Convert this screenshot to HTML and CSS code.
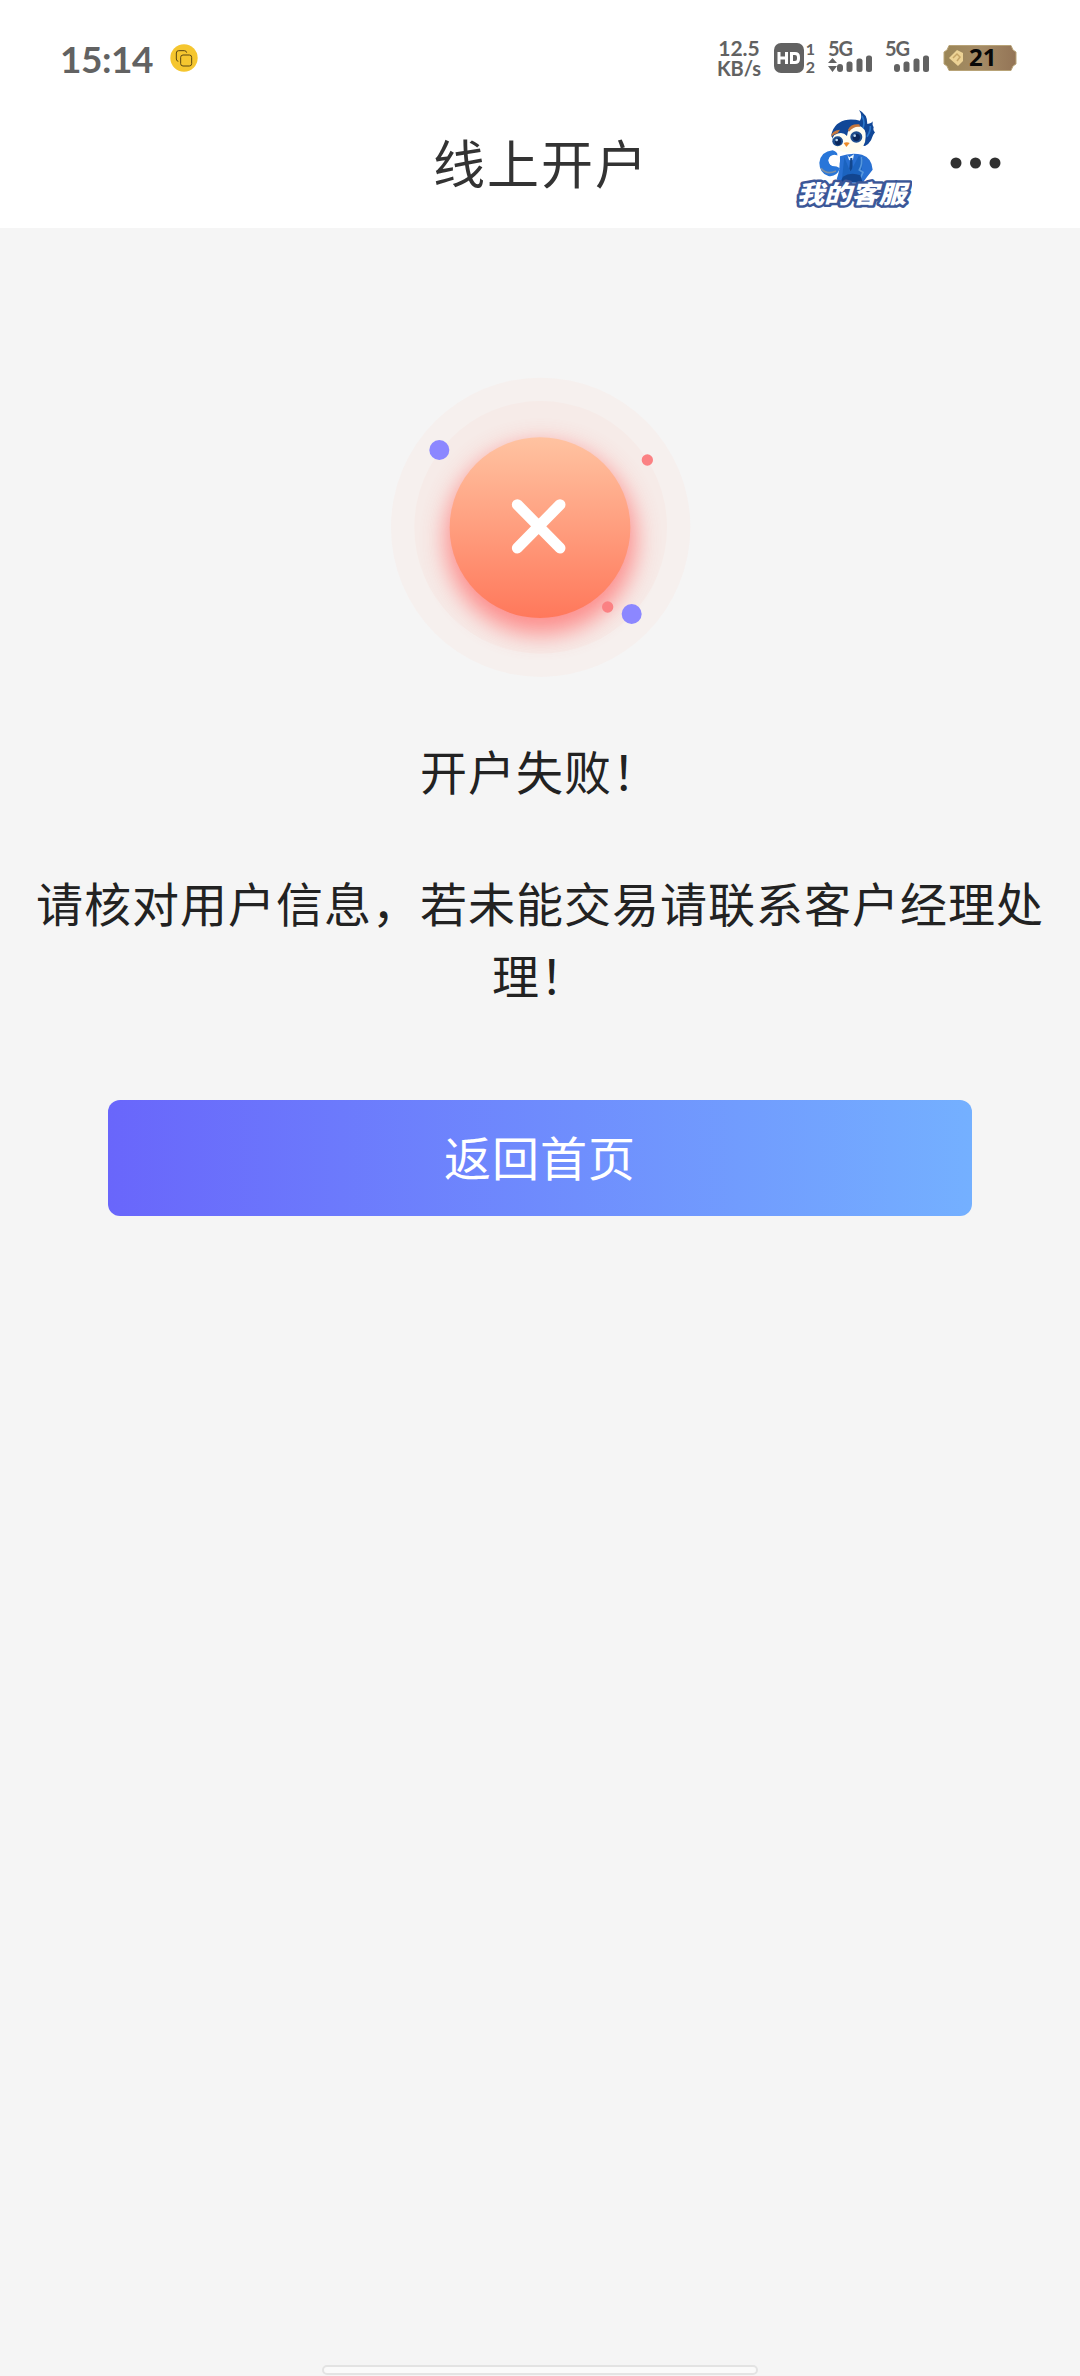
FILE: index.html
```html
<!DOCTYPE html>
<html lang="zh-CN">
<head>
    <meta charset="UTF-8">
    <meta name="viewport" content="width=device-width, initial-scale=1.0">
    <title>线上开户</title>
    <link rel="stylesheet" href="styles.css">
</head>
<body>
    <div class="status-bar">
        <span class="time">15:14</span>
        <svg class="app-dot" width="28" height="28" viewBox="0 0 84 84">
            <circle cx="42" cy="42" r="41" fill="#f5c62f"/>
            <g fill="none" stroke="#5b4712" stroke-width="3">
                <path d="M25 52 Q19 51 19 45 V27 Q19 20 26 20 H43 Q49 20 50 26"/>
                <rect x="32" y="33" width="33" height="33" rx="7"/>
            </g>
        </svg>
        <div class="speed">
            <span>12.5</span>
            <span>KB/s</span>
        </div>
        <div class="hd">
            <svg width="30" height="30" viewBox="0 0 30 30">
                <rect width="30" height="30" rx="7" fill="#626262"/>
                <path d="M5 9V21M12.500 9V21M5 15H12.500M17.500 10.500H21Q24.500 10.500 24.500 14V16Q24.500 19.500 21 19.500H17.500ZM17.500 9V21" fill="none" stroke="#fff" stroke-width="3"/>
            </svg>
            <div class="sims">
                <span>1</span>
                <span>2</span>
            </div>
        </div>
        <svg class="signal" width="46" height="50" viewBox="0 -8 46 50">
            <text x="0" y="15" class="net">5G</text>
            <path d="M0 22 4.500 17 9 22ZM0 25 4.500 31 9 25Z"/>
            <rect x="9" y="23" width="6" height="8" rx="3"/>
            <rect x="18.500" y="20.500" width="6" height="10.500" rx="2.500"/>
            <rect x="28.500" y="17.500" width="6" height="13.500" rx="2.500"/>
            <rect x="38" y="14.500" width="6" height="16.500" rx="2.500"/>
        </svg>
        <svg class="signal" width="46" height="50" viewBox="0 -8 46 50">
            <text x="0" y="15" class="net">5G</text>
            <rect x="9" y="23" width="6" height="8" rx="3"/>
            <rect x="18.500" y="20.500" width="6" height="10.500" rx="2.500"/>
            <rect x="28.500" y="17.500" width="6" height="13.500" rx="2.500"/>
            <rect x="38" y="14.500" width="6" height="16.500" rx="2.500"/>
        </svg>
        <svg class="battery" width="74" height="44" viewBox="0 -8 74 44">
            <defs>
                <linearGradient id="gold">
                    <stop offset="0" stop-color="#9a8556"/>
                    <stop offset=".5" stop-color="#a58b66"/>
                    <stop offset="1" stop-color="#937456"/>
                </linearGradient>
            </defs>
            <path d="M6 1.500H68L70 6 73 8V20L70 22 68 26.500H6L4 22 1 20V8L4 6Z" fill="url(#gold)" stroke="#b8a377"/>
            <path d="M6 14 14 6 20 9V17L15 22Z" fill="#ecd295"/>
            <path d="M10 14 14 10 17 13 14 17" fill="none" stroke="#c5a466" stroke-width="1.500"/>
            <text x="26" y="22" class="level">21</text>
        </svg>
    </div>

    <div class="nav-bar">
        <h1 class="nav-title">线上开户</h1>
        <!-- customer service mascot -->
        <svg class="mascot" width="122" height="113" viewBox="30 21 366 339">
            <path d="M154 104Q163 64 204 59Q226 58 240 62Q249 47 237 30Q263 43 262 72Q275 70 278 64Q276 76 281 82Q278 91 285 97Q278 104 273 121Q267 132 255 138L160 126Z" fill="#114797"/>
            <path d="M246 48Q257 67 247 90M271 78Q272 94 261 110" fill="none" stroke="#2c77ca" stroke-width="5"/>
            <path d="M163 105Q187 91 201 108Q205 78 233 75Q260 84 257 111Q257 145 226 157Q202 164 174 149Q157 138 157 115Z" fill="#fffdf0"/>
            <path d="M153 111Q154 91 180 89L173 100Q164 101 153 111ZM204 89Q213 70 238 73L240 81Q222 78 207 95Z" fill="#c6773c"/>
            <ellipse cx="173" cy="124" rx="16" ry="15" fill="#1d4d8d"/>
            <ellipse cx="174" cy="125" rx="9" ry="10" fill="#0b285b"/>
            <circle cx="170" cy="120" r="4" fill="#b9d9f4"/>
            <ellipse cx="229" cy="111" rx="18" ry="17" fill="#1d4d8d"/>
            <ellipse cx="229" cy="112" rx="11" ry="11" fill="#0b285b"/>
            <circle cx="224" cy="107" r="4" fill="#b9d9f4"/>
            <path d="M191 129Q200 124 209 129L199 141Z" fill="#ee8b27"/>
            <path d="M180 169Q212 157 246 164Q276 174 278 209L261 231L248 248H184L170 238Q176 220 178 208Z" fill="#2870d2"/>
            <path d="M202 165 208 172 222 163 219 178 214 184 207 179Z" fill="#e9f5fb"/>
            <path d="M211 174H217L218 209 213 217 208 207Z" fill="#12478f"/>
            <path d="M193 171 211 216 236 168 249 174 242 246H185Z" fill="#1b63bf"/>
            <path d="M244 171Q248 191 238 210L249 217 240 237" fill="none" stroke="#5797dc" stroke-width="5"/>
            <path d="M189 230Q211 215 241 226L248 247H181Z" fill="#12458f"/>
            <path d="M158 151Q123 154 118 188Q118 219 145 228Q170 232 180 205Q171 198 157 198Q143 191 146 178Q152 165 172 167Q174 156 158 151Z" fill="#2876d9"/>
            <path d="M123 205Q139 226 168 213" fill="none" stroke="#7a8fa5" stroke-width="5"/>
            <circle cx="163" cy="181" r="17" fill="#fff"/>
            <text x="50" y="308" textLength="328" lengthAdjust="spacingAndGlyphs" class="mascot-text">我的客服</text>
        </svg>
        <svg class="more" width="52" height="12" viewBox="0 0 52 12">
            <circle cx="6" cy="6" r="5.500"/>
            <circle cx="25.500" cy="6" r="5.500"/>
            <circle cx="45" cy="6" r="5.500"/>
        </svg>
    </div>

    <div class="result">
        <svg class="fail-icon" width="320" height="330" viewBox="0 0 960 990">
            <defs>
                <linearGradient id="disc" x2="0" y2="1">
                    <stop offset="0" stop-color="#ffc3a1"/>
                    <stop offset="1" stop-color="#ff785b"/>
                </linearGradient>
                <filter id="blur" x="-30%" y="-30%" width="160%" height="160%">
                    <feGaussianBlur stdDeviation="36"/>
                </filter>
            </defs>
            <circle cx="482" cy="502" r="449" fill="#f6f0ee"/>
            <circle cx="482" cy="502" r="379" fill="#f6ebe8"/>
            <circle cx="482" cy="538" r="285" fill="#ff7674" opacity=".8" filter="url(#blur)"/>
            <circle cx="480" cy="503" r="271" fill="url(#disc)"/>
            <path d="M412 434 540 564M540 434 412 564" stroke="#fff" stroke-width="33" stroke-linecap="round"/>
            <circle cx="178" cy="270" r="30" fill="#8c87ff"/>
            <circle cx="755" cy="762" r="30" fill="#8c87ff"/>
            <circle cx="802" cy="300" r="17" fill="#fb8183"/>
            <circle cx="683" cy="741" r="17" fill="#fb8183"/>
        </svg>
        <p class="result-title">开户失败！</p>
        <p class="result-msg">请核对用户信息，若未能交易请联系客户经理处理！</p>
        <button class="home-btn" type="button">返回首页</button>
    </div>

    <div class="gesture-bar"></div>
</body>
</html>
```
FILE: styles.css
```css
* {
    margin: 0;
    padding: 0;
    box-sizing: border-box;
}
body {
    display: flex;
    flex-direction: column;
    height: 2376px;
    overflow: hidden;
    background: #f5f5f5;
    color: #222;
    font-family: "Noto Sans CJK SC", sans-serif;
}
.status-bar {
    display: flex;
    align-items: center;
    height: 116px;
    padding: 0 63px 0 60px;
    background: #fff;
    color: #626262;
    font-family: Lato, sans-serif;
    font-weight: bold;
}
.time {
    width: 94px;
    font-size: 37px;
    letter-spacing: -0.5px;
    white-space: nowrap;
}
.app-dot {
    margin-left: 16px;
}
.speed {
    width: 50px;
    margin-left: auto;
    font-size: 21px;
    line-height: 20px;
    text-align: center;
}
.speed span {
    display: block;
}
.speed span:last-child {
    font-size: 20px;
}
.hd {
    display: flex;
    align-items: center;
    width: 43px;
    margin-left: 10px;
}
.sims {
    width: 13px;
    font-size: 16px;
    line-height: 18px;
    text-align: center;
}
.sims span {
    display: block;
}
.signal {
    margin-left: 11px;
    fill: #626262;
}
.net {
    font-size: 20px;
    font-weight: bold;
    letter-spacing: -1px;
}
.battery {
    margin-left: 12px;
}
.level {
    fill: #080808;
    font-family: "Open Sans", sans-serif;
    font-size: 24px;
    font-weight: bold;
}
.nav-bar {
    display: grid;
    grid-template-columns: 1fr 214px 1fr;
    align-items: start;
    height: 112px;
    background: #fff;
    position: relative;
}
.nav-title {
    grid-column: 2;
    margin-top: 7px;
    color: #333;
    font-size: 52px;
    font-weight: normal;
    letter-spacing: 2px;
    line-height: 78px;
    white-space: nowrap;
}
.mascot {
    position: absolute;
    left: 790px;
    top: -9px;
}
.mascot-text {
    fill: #fff;
    stroke: #3b5798;
    stroke-width: 15px;
    stroke-linejoin: round;
    paint-order: stroke;
    font-size: 74px;
    font-style: italic;
    font-weight: 900;
}
.more {
    position: absolute;
    right: 78px;
    top: 41px;
    fill: #303030;
}
.result {
    flex: 1;
    display: flex;
    flex-direction: column;
    align-items: center;
    padding: 132px 36px 0;
    font-size: 47px;
    letter-spacing: 1px;
    line-height: 72px;
    text-align: center;
}
.fail-icon {
    margin-bottom: 44px;
}
.result-title {
    margin-bottom: 60px;
}
.result-msg {
    margin-bottom: 90px;
}
.home-btn {
    width: 864px;
    height: 116px;
    padding-bottom: 6px;
    border: none;
    border-radius: 12px;
    background: linear-gradient(90deg, #6966fb, #74b0ff);
    color: #fff;
    font-family: inherit;
    font-size: 47px;
    letter-spacing: 1px;
}
.gesture-bar {
    width: 436px;
    height: 10px;
    margin: 0 auto 1px;
    border: 2px solid #e3e3e3;
    border-radius: 5px;
    background: #fafafa;
}
```
